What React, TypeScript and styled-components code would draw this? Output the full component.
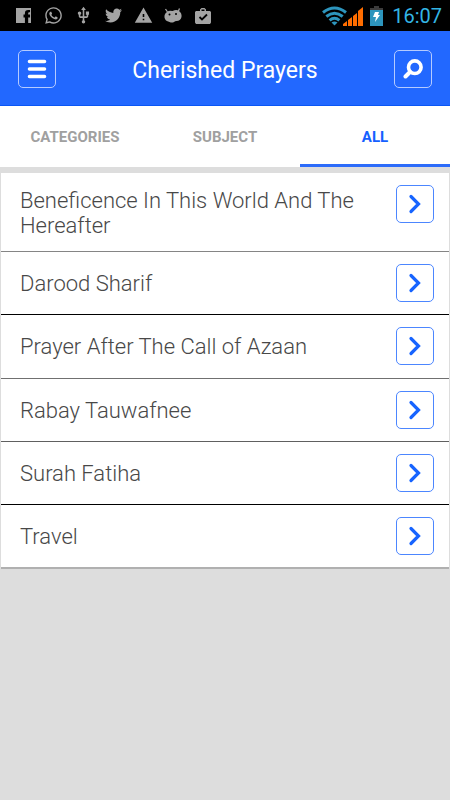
import React, { useState } from "react";
import styled, { createGlobalStyle } from "styled-components";
import { FaTwitter, FaWhatsapp } from "react-icons/fa";
import { MdUsb, MdWarning } from "react-icons/md";

const GlobalStyle = createGlobalStyle`
  *, *::before, *::after { box-sizing: border-box; }
  body {
    margin: 0;
    background: #dddddd;
    font-family: Roboto, "Noto Sans", sans-serif;
  }
  button { font-family: inherit; cursor: pointer; }
`;

const StatusBar = styled.div`
  display: flex;
  align-items: center;
  justify-content: space-between;
  height: 31px;
  padding: 0 8px 0 13px;
  background: #000;
  color: #a4a4a4;
`;

const Notifications = styled.div`
  display: flex;
  align-items: center;
  gap: 10px;
`;

const StatusIcon = styled.span`
  display: grid;
  place-items: center;
  width: 20px;
  height: 20px;
  svg { display: block; }
`;

const SystemStatus = styled.div`
  display: flex;
  align-items: center;
  color: #33b5e5;
`;

const BatteryIcon = styled.svg`
  margin: 0 9px 0 7px;
`;

const Clock = styled.time`
  padding-top: 1px;
  font-size: 20px;
  line-height: 30px;
  font-weight: 400;
`;

const Header = styled.header`
  display: grid;
  grid-template-columns: 38px 1fr 38px;
  align-items: center;
  height: 75px;
  padding: 2px 18px 0;
  background: #2268ff;
  border-bottom: 1px solid #0a56f5;
`;

const Title = styled.h1`
  margin: 0;
  padding-top: 4px;
  color: #fff;
  font-size: 23px;
  line-height: 30px;
  font-weight: 400;
  text-align: center;
`;

const HeaderButton = styled.button`
  display: grid;
  place-items: center;
  width: 38px;
  height: 38px;
  padding: 0;
  color: #fff;
  background: transparent;
  border: 1px solid #b5cbff;
  border-radius: 5px;
`;

const Tabs = styled.nav`
  display: grid;
  grid-template-columns: repeat(3, 1fr);
  height: 61px;
  background: #fff;
`;

const Tab = styled.button<{ $active: boolean }>`
  padding: 4px 0 0;
  color: ${({ $active }) => ($active ? "#1560ff" : "#a0a0a0")};
  background: transparent;
  border: 0;
  border-bottom: ${({ $active }) => ($active ? "3px solid #2c6cfa" : "3px solid #fff")};
  font-size: 15px;
  line-height: 20px;
  font-weight: 700;
`;

const PrayerList = styled.ul`
  margin: 6px 1px 0;
  padding: 0;
  list-style: none;
  background: #fff;
`;

const PrayerRow = styled.li<{ $divider: string }>`
  display: flex;
  align-items: flex-start;
  justify-content: space-between;
  padding: 12px 15px 12px 19px;
  border-bottom: 1px solid ${({ $divider }) => $divider};
  &:nth-child(3n + 3) { padding-bottom: 13px; }
  &:last-child { border-bottom-width: 2px; padding-bottom: 12px; }
`;

const PrayerName = styled.span`
  max-width: 350px;
  padding: 3px 0 1px;
  color: #484848;
  font-size: 22px;
  line-height: 25px;
  font-weight: 300;
`;

const ShortName = styled(PrayerName)`
  padding: 7px 0 6px;
`;

const OpenButton = styled.button`
  display: grid;
  flex: none;
  place-items: center;
  width: 38px;
  height: 38px;
  padding: 0;
  color: #1764ff;
  background: #fff;
  border: 1px solid #4c86ff;
  border-radius: 5px;
`;

const prayers = [
  { name: "Beneficence In This World And The Hereafter", divider: "#858585", long: true },
  { name: "Darood Sharif", divider: "#000" },
  { name: "Prayer After The Call of Azaan", divider: "#707070" },
  { name: "Rabay Tauwafnee", divider: "#606060" },
  { name: "Surah Fatiha", divider: "#000" },
  { name: "Travel", divider: "#b0b0b0" },
];

const tabNames = ["CATEGORIES", "SUBJECT", "ALL"];

export default function App() {
  const [active, setActive] = useState("ALL");
  return (
    <>
      <GlobalStyle />
      <StatusBar>
        <Notifications>
          <StatusIcon>
            <svg width="15" height="15" viewBox="0 0 16 16" aria-hidden="true">
              <path fill="currentColor" d="M0 0h16v16h-3V10h2V7h-2V5.500q0-1 1-1h1V2h-2q-3.500 0-3.500 3.500V7H8v3h1.500v6H0z" />
            </svg>
          </StatusIcon>
          <StatusIcon><FaWhatsapp size={19} /></StatusIcon>
          <StatusIcon><MdUsb size={19} /></StatusIcon>
          <StatusIcon><FaTwitter size={17} /></StatusIcon>
          <StatusIcon><MdWarning size={19} /></StatusIcon>
          <StatusIcon>
            <svg width="18" height="16" viewBox="0 0 18 16" aria-hidden="true">
              <path d="M3.500 4 1.500 1M14 4l1.500-3.500" stroke="currentColor" strokeWidth="1.300" />
              <path fill="currentColor" d="M3 4q2-2 5.500-1 4-2 6.500 0 3 2 2.500 6-1 4-5 4-1.500 0-2.500 1-2 1-4.500 0Q1 13 .5 9.500 0 6 3 4z" />
              <circle cx="5.500" cy="6.500" r="1" /><circle cx="12" cy="6" r="1" />
            </svg>
          </StatusIcon>
          <StatusIcon>
            <svg width="16" height="16" viewBox="0 0 16 16" aria-hidden="true">
              <path fill="currentColor" fillRule="evenodd" d="M5 3V1.500L6.500 0h3L11 1.500V3h4l1 1v10.500L15 16H1l-1-1.500V4l1-1zm1.500 0h3V1.500h-3z" />
              <path d="m4.500 9 2.500 2.500 5-5" fill="none" stroke="#000" strokeWidth="1.800" />
            </svg>
          </StatusIcon>
        </Notifications>
        <SystemStatus>
          <svg width="41" height="20" viewBox="0 0 41 20" aria-hidden="true">
            <g fill="none" stroke="#2d95bd" strokeWidth="3">
              <path d="M1 6.500q11.500-9 23 0M4.300 10.500q8.200-6.500 16.400 0M7.600 14.300q4.900-4 9.800 0" />
            </g>
            <path fill="#2d95bd" d="M9.500 16.500q3-2 6 0l-3 3z" />
            <path fill="#ff6d00" d="M21 20v-2l4-3v5zM26 20v-6l4-3v9zM31 20V10l4-3v13zM36 20V5l5-4v19z" />
          </svg>
          <BatteryIcon width="13" height="20" viewBox="0 0 13 20" aria-hidden="true">
            <path fill="#3c3c3c" d="M4 0h5v2h4v3H0V2h4z" />
            <path fill="#2d95bd" d="M0 4h13v16H0z" />
            <path fill="#fff" d="M5 6h4L8 9h2l-5 7 1-5H3z" />
          </BatteryIcon>
          <Clock>16:07</Clock>
        </SystemStatus>
      </StatusBar>
      <Header>
        <HeaderButton aria-label="Menu">
          <svg width="20" height="20" viewBox="0 0 20 20" aria-hidden="true">
            <path d="M2.500 2.500h15M2.500 10h15M2.500 17.500h15" stroke="currentColor" strokeWidth="3.600" strokeLinecap="round" />
          </svg>
        </HeaderButton>
        <Title>Cherished Prayers</Title>
        <HeaderButton aria-label="Search">
          <svg width="20" height="20" viewBox="0 0 20 20" aria-hidden="true">
            <circle cx="11.800" cy="8.200" r="6.300" fill="none" stroke="currentColor" strokeWidth="3.600" />
            <path d="m7 13-4.500 4.500" stroke="currentColor" strokeWidth="4" strokeLinecap="round" />
          </svg>
        </HeaderButton>
      </Header>
      <Tabs>
        {tabNames.map((name) => (
          <Tab key={name} $active={active === name} onClick={() => setActive(name)}>{name}</Tab>
        ))}
      </Tabs>
      <PrayerList>
        {prayers.map(({ name, divider, long }) => {
          const Name = long ? PrayerName : ShortName;
          return (
            <PrayerRow key={name} $divider={divider}>
              <Name>{name}</Name>
              <OpenButton aria-label={`Open ${name}`}>
                <svg width="20" height="20" viewBox="0 0 20 20" aria-hidden="true">
                  <path d="m6 2.500 7.500 7.500L6 17.500" fill="none" stroke="currentColor" strokeWidth="3.200" strokeLinecap="round" />
                </svg>
              </OpenButton>
            </PrayerRow>
          );
        })}
      </PrayerList>
    </>
  );
}
